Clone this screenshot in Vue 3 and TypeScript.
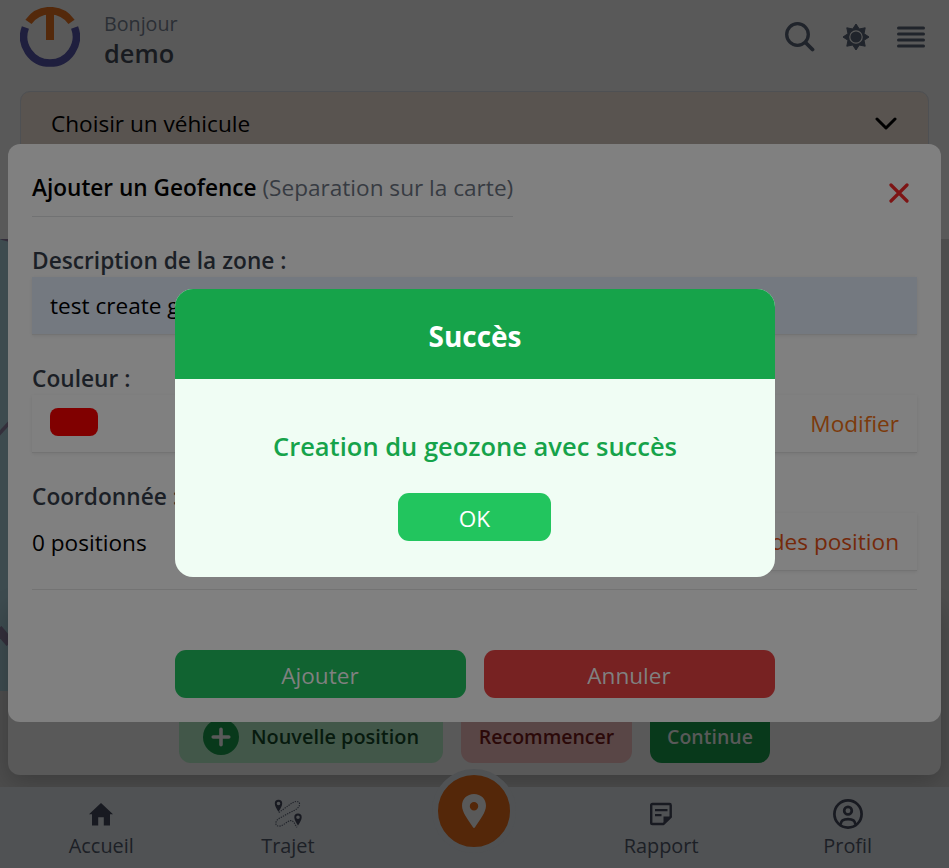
<script setup lang="ts">
interface NavItem { label: string; icon: 'home' | 'route' | 'pin' | 'note' | 'user' }

const nav: NavItem[] = [
  { label: 'Accueil', icon: 'home' },
  { label: 'Trajet', icon: 'route' },
  { label: '', icon: 'pin' },
  { label: 'Rapport', icon: 'note' },
  { label: 'Profil', icon: 'user' },
]
</script>

<template>
  <div class="app">
    <header class="top">
      <svg class="logo" viewBox="0 0 60 60">
        <path d="M8.500 14.800A26.300 26.300 0 0 1 51.500 14.800" fill="none" stroke="#54290b" stroke-width="7.500" />
        <path d="M26 5h8v28h-8z" fill="#54290b" />
        <path d="M5.400 20.500A26.300 26.300 0 1 0 54.600 20.500" fill="none" stroke="#1f1f3e" stroke-width="7.500" />
      </svg>
      <div class="hello">
        <span class="hi">Bonjour</span>
        <strong class="name">demo</strong>
      </div>
      <div class="tools">
        <svg class="ic-search" viewBox="0 0 30 30"><circle cx="12.500" cy="12.500" r="10.800" fill="none" stroke="#20242b" stroke-width="3.300" /><path d="M20.500 20.500L27.500 27.500" stroke="#20242b" stroke-width="3.800" stroke-linecap="round" /></svg>
        <svg class="ic-sun" viewBox="0 0 28 28"><path fill="#20242b" stroke="#20242b" stroke-width="1" stroke-linejoin="round" d="M14 1L17.300 6 23.200 4.800 22 10.700 27 14 22 17.300 23.200 23.200 17.300 22 14 27 10.700 22 4.800 23.200 6 17.300 1 14 6 10.700 4.800 4.800 10.700 6z" /><circle cx="14" cy="14" r="6.200" fill="#20242b" stroke="#595959" stroke-width="1.200" /></svg>
        <svg class="ic-menu" viewBox="0 0 28 24"><path d="M1.500 3h25M1.500 9h25M1.500 15h25M1.500 21h25" stroke="#20242b" stroke-width="3" stroke-linecap="round" /></svg>
      </div>
    </header>

    <div class="vehicle">
      <span class="vehicle-label">Choisir un véhicule</span>
      <svg class="chev" viewBox="0 0 22 14"><path d="M2 2l9 9 9-9" fill="none" stroke="#000" stroke-width="3" stroke-linecap="round" stroke-linejoin="round" /></svg>
    </div>

    <div class="map">
      <svg class="roads" viewBox="0 0 8 452">
        <path d="M0 0h8v2.500L2 1z" fill="#332c3a" />
        <path d="M-2 196L10 183" stroke="#342f3b" stroke-width="3.500" />
        <path d="M-2 390L10 404" stroke="#342f3b" stroke-width="9" />
      </svg>
    </div>

    <section class="draw-panel">
      <button class="chip chip-new">
        <svg viewBox="0 0 36 36"><circle cx="18" cy="18" r="18" fill="#08391b" /><path d="M18 10.200v15.600M10.200 18h15.600" stroke="#595959" stroke-width="3.600" stroke-linecap="round" /></svg>
        <span>Nouvelle position</span>
      </button>
      <button class="chip chip-reset"><span>Recommencer</span></button>
      <button class="chip chip-go"><span>Continue</span></button>
    </section>

    <nav class="bottom">
      <div v-for="item in nav" :key="item.icon" class="nav-item">
        <svg v-if="item.icon === 'home'" class="nav-ic" viewBox="0 0 30 30"><path fill="#181a21" d="M15 4L27 15.200h-3V26.500h-6.200v-8.200h-5.600v8.200H6V15.200H3z" /></svg>
        <svg v-else-if="item.icon === 'route'" class="nav-ic" viewBox="0 0 30 30">
          <path d="M5.800 13.500L17 5.500C21 2 26 1.500 26.500 4.500C27.200 8 23 11 17 13.500L6 19.500C2 22 1.500 27 6 27.200C10 27 14 22.500 17.500 21.500C21 21.500 22 26 24 28.300" fill="none" stroke="#20232a" stroke-width="1.100" stroke-dasharray="1.300 1.100" />
          <path fill-rule="evenodd" fill="#181a21" d="M5.500.800a3.700 3.700 0 0 1 3.700 3.700C9.200 7 7.200 10 5.500 12.800C3.800 10 1.800 7 1.800 4.500A3.700 3.700 0 0 1 5.500.800zM5.500 2.700a1.800 1.800 0 1 0 0 3.600a1.800 1.800 0 0 0 0-3.600z" />
          <path transform="translate(19.500 13.800)" fill-rule="evenodd" fill="#181a21" d="M5.500.800a3.700 3.700 0 0 1 3.700 3.700C9.200 7 7.200 10 5.500 12.800C3.800 10 1.800 7 1.800 4.500A3.700 3.700 0 0 1 5.500.800zM5.500 2.700a1.800 1.800 0 1 0 0 3.600a1.800 1.800 0 0 0 0-3.600z" />
        </svg>
        <span v-else-if="item.icon === 'pin'" class="fab">
          <svg viewBox="0 0 28 36"><path fill="#595959" fill-rule="evenodd" d="M14 1C7 1 2 6 2 12.800C2 19.500 8 26.500 12.800 34Q14 36 15.200 34C20 26.500 26 19.500 26 12.800C26 6 21 1 14 1zM14 9a4.200 4.200 0 1 0 0 8.400a4.200 4.200 0 0 0 0-8.400z" /></svg>
        </span>
        <svg v-else-if="item.icon === 'note'" class="nav-ic" viewBox="0 0 30 30"><path d="M6.500 5H23.500q1.200 0 1.200 1.200V18l-7.200 7H6.500q-1.300 0-1.300-1.300V6.300Q5.200 5 6.500 5z" fill="none" stroke="#181a21" stroke-width="2.400" stroke-linejoin="round" /><path d="M17.500 17.500H26L17.500 26z" fill="#181a21" /><path d="M9 11.200h12.500M9 16.200h6.500" stroke="#181a21" stroke-width="2.200" /></svg>
        <svg v-else class="nav-ic" viewBox="0 0 30 30" fill="none" stroke="#181a21" stroke-width="2.700"><circle cx="15" cy="15" r="13.600" /><circle cx="15" cy="11.700" r="3.800" /><path d="M7.500 25.500C8 21.500 10 20.200 15 20.200S22 21.500 22.500 25.500" /></svg>
        <span v-if="item.label" class="nav-label">{{ item.label }}</span>
      </div>
    </nav>

    <section class="dialog">
      <div class="dialog-head">
        <h2 class="title"><b>Ajouter un Geofence</b> <span class="sub">(Separation sur la carte)</span></h2>
        <svg class="close" viewBox="0 0 20 20"><path d="M2 2l16 16M18 2L2 18" stroke="#7d1414" stroke-width="3.200" stroke-linecap="round" /></svg>
      </div>
      <div class="field">
        <label>Description de la zone :</label>
        <div class="box filled"><span>test create geozone</span></div>
      </div>
      <div class="field">
        <label>Couleur :</label>
        <div class="box"><i class="swatch"></i><span class="link">Modifier</span></div>
      </div>
      <div class="field field-coord">
        <label>Coordonnée :</label>
        <div class="coord">
          <span class="count">0 positions</span>
          <div class="box grow"><span class="link deep">Modifier des position</span></div>
        </div>
      </div>
      <div class="actions">
        <button class="act add">Ajouter</button>
        <button class="act cancel">Annuler</button>
      </div>
    </section>

    <section class="alert">
      <h3 class="alert-head">Succès</h3>
      <div class="alert-body">
        <p>Creation du geozone avec succès</p>
        <button class="ok">OK</button>
      </div>
    </section>
  </div>
</template>

<style>
body { margin: 0; overflow: hidden; }
</style>

<style scoped>
* { box-sizing: border-box; }
.app { position: relative; width: 949px; height: 868px; overflow: hidden; background: #4d4d4d; font-family: "Segoe UI", "Open Sans", "Noto Sans", sans-serif; font-size: 22.600px; line-height: 36px; color: #000; display: flex; flex-direction: column; }
span, label, b, p, strong { white-space: nowrap; }
button { border: 0; padding: 0; font-family: inherit; font-size: inherit; line-height: inherit; }
.app::before { content: ""; position: absolute; left: 0; top: 0; width: 100%; height: 239px; background: #595959; }
.top { position: relative; display: flex; height: 91px; padding: 7px 24px 0 20px; }
.logo { width: 60px; height: 60px; }
.hello { display: flex; flex-direction: column; margin-left: 24px; color: #2b2f35; line-height: 30px; padding-top: 2px; }
.hi { font-size: 19.700px; height: 29px; }
.name { font-size: 25.400px; font-weight: 600; color: #181b20; }
.tools { margin-left: auto; display: flex; height: 60px; align-items: center; }
.ic-search { width: 30px; height: 30px; margin-right: 27px; }
.ic-sun { width: 28px; height: 28px; margin-right: 27px; }
.ic-menu { width: 28px; height: 24px; }
.vehicle { position: relative; margin: 0 20px; height: 66px; flex: none; border: 1px solid #4e5053; border-radius: 10px; background: #595450; display: flex; justify-content: space-between; padding: 14px 31px 0 30px; }
.chev { width: 22px; height: 14px; margin-top: 11px; }
.map { position: relative; margin-top: 82px; width: 8px; height: 452px; background: #3d4b4f; }
.roads { display: block; width: 8px; height: 452px; }
.draw-panel { position: absolute; left: 8px; top: 600px; width: 933px; height: 175px; border-radius: 12px; background: #595959; box-shadow: 0 8px 24px rgba(0, 0, 0, .22); display: flex; align-items: flex-end; justify-content: center; gap: 18px; padding-bottom: 12px; }
.chip { height: 53px; border-radius: 12px; font-size: 19.900px; font-weight: 600; display: flex; align-items: center; justify-content: center; }
.chip-new { width: 264px; background: #425749; color: #071a0e; gap: 12px; }
.chip-new svg { width: 36px; height: 36px; }
.chip-reset { width: 171px; background: #594646; color: #2b0909; font-size: 19.500px; }
.chip-go { width: 120px; background: #08391b; color: #595959; font-size: 19.500px; }
.bottom { position: absolute; left: 0; top: 787px; width: 949px; height: 81px; background: #505254; display: grid; grid-template-columns: repeat(5, 1fr); padding: 0 8px; }
.nav-item { display: flex; flex-direction: column; align-items: center; color: #1c2026; font-size: 19.900px; line-height: 30px; padding-top: 12px; }
.nav-ic { width: 30px; height: 30px; }
.nav-label { margin-top: 2px; }
.fab { margin-top: -30px; width: 84px; height: 84px; border-radius: 50%; border: 6px solid #505254; background: #542709; display: flex; align-items: center; justify-content: center; }
.fab svg { width: 28px; height: 36px; }
.dialog { position: absolute; left: 8px; top: 144px; width: 933px; height: 578px; border-radius: 12px; background: #808080; padding: 24px; display: flex; flex-direction: column; }
.dialog-head { display: flex; justify-content: space-between; height: 75px; }
.title { margin: 0; font-size: 22.600px; font-weight: 400; height: 49px; line-height: 40px; border-bottom: 1px solid #717273; }
.title b { font-weight: 600; }
.sub { color: #373b42; }
.close { width: 20px; height: 20px; margin: 15px 8px 0 0; }
.field { height: 118px; color: #1b1f26; }
.field label { display: block; height: 34px; line-height: 36px; font-weight: 600; font-size: 22.700px; }
.box { height: 58px; border-bottom: 1px solid #737373; box-shadow: 0 1px 3px rgba(0, 0, 0, .08); display: flex; align-items: center; padding: 0 18px; color: #000; }
.filled { background: #747980; }
.swatch { width: 48px; height: 28px; border-radius: 8px; background: #800000; margin-bottom: 4px; }
.link { margin-left: auto; color: #7c3a0b; }
.deep { color: #75290a; }
.coord { display: flex; align-items: center; gap: 60px; color: #000; }
.count { padding-top: 2px; }
.grow { flex: 1; }
.field-coord { border-bottom: 1px solid #737373; height: 111px; }
.actions { display: flex; justify-content: center; gap: 18px; margin-top: 60px; }
.act { width: 291px; height: 48px; border-radius: 11px; color: #808080; padding-top: 3px; }
.add { background: #116331; }
.cancel { background: #772222; }
.alert { position: absolute; left: 175px; top: 289px; width: 600px; height: 288px; border-radius: 18px; overflow: hidden; background: #f0fdf4; }
.alert-head { margin: 0; height: 90px; background: #16a34a; color: #fff; display: flex; align-items: center; justify-content: center; font-size: 28px; font-weight: 700; padding-top: 4px; }
.alert-body { display: flex; flex-direction: column; align-items: center; padding-top: 47px; color: #16a34a; }
.alert-body p { margin: 0; font-size: 25.500px; line-height: 40px; font-weight: 600; }
.ok { margin: 27px 1px 0 0; width: 153px; height: 48px; border-radius: 11px; background: #22c55e; color: #fff; padding-top: 3px; }
</style>
